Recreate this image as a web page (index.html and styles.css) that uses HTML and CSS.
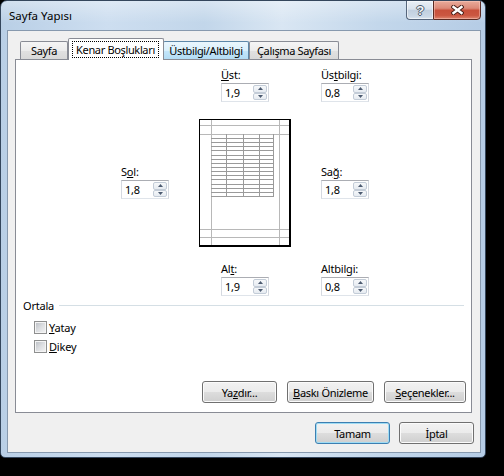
FILE: index.html
```html
<!DOCTYPE html>
<html lang="tr">
<head>
<meta charset="utf-8">
<title>Sayfa Yapısı</title>
<link rel="stylesheet" href="styles.css">
</head>
<body>
<div class="window">
  <div class="titlebar">
    <span class="title">Sayfa Yapısı</span>
    <div class="caption-buttons">
      <div class="cbtn help"><span class="help-glyph">?</span></div>
      <div class="cbtn close">
        <svg width="13" height="10" viewBox="0 0 13 10">
          <path d="M2.5 2 L10.5 8 M10.5 2 L2.5 8" stroke="#4a2018" stroke-width="4.4" stroke-linecap="square" fill="none"/>
          <path d="M2.5 2 L10.5 8 M10.5 2 L2.5 8" stroke="#ffffff" stroke-width="2.4" stroke-linecap="square" fill="none"/>
        </svg>
      </div>
    </div>
  </div>
  <div class="client">
    <div class="tabs">
      <div class="tab tab-sayfa">Sayfa</div>
      <div class="tab tab-kenar selected"><span class="focus">Kenar Boşlukları</span></div>
      <div class="tab tab-ust hover">Üstbilgi/Altbilgi</div>
      <div class="tab tab-calisma">Çalışma Sayfası</div>
    </div>
    <div class="panel">
      <div class="margins">
        <div class="field f-ust">
          <div class="label"><u>Ü</u>st:</div>
          <div class="spin"><span class="value">1,9</span><span class="arrows"><span class="arr up"><svg width="5" height="3" viewBox="0 0 5 3"><path d="M0 3 L2.5 0 L5 3 Z" fill="#4c5a70"/></svg></span><span class="arr down"><svg width="5" height="3" viewBox="0 0 5 3"><path d="M0 0 L2.5 3 L5 0 Z" fill="#4c5a70"/></svg></span></span></div>
        </div>
        <div class="field f-ustbilgi">
          <div class="label">Üs<u>t</u>bilgi:</div>
          <div class="spin"><span class="value">0,8</span><span class="arrows"><span class="arr up"><svg width="5" height="3" viewBox="0 0 5 3"><path d="M0 3 L2.5 0 L5 3 Z" fill="#4c5a70"/></svg></span><span class="arr down"><svg width="5" height="3" viewBox="0 0 5 3"><path d="M0 0 L2.5 3 L5 0 Z" fill="#4c5a70"/></svg></span></span></div>
        </div>
        <div class="field f-sol">
          <div class="label">S<u>o</u>l:</div>
          <div class="spin"><span class="value">1,8</span><span class="arrows"><span class="arr up"><svg width="5" height="3" viewBox="0 0 5 3"><path d="M0 3 L2.5 0 L5 3 Z" fill="#4c5a70"/></svg></span><span class="arr down"><svg width="5" height="3" viewBox="0 0 5 3"><path d="M0 0 L2.5 3 L5 0 Z" fill="#4c5a70"/></svg></span></span></div>
        </div>
        <svg class="preview" width="92" height="128" viewBox="0 0 92 128">
          <rect x="0" y="0" width="92" height="128" fill="#000"/>
          <rect x="1" y="1" width="89" height="125" fill="#fff"/>
          <g stroke="#b8b8b8" stroke-width="1" fill="none">
            <path d="M1 6.5 H90 M1 15.5 H90 M1 110.5 H90 M1 118.5 H90 M12.5 1 V126 M80.5 1 V126"/>
          </g>
          <g stroke="#9a9a9a" stroke-width="1" fill="none">
            <path d="M27.5 15 V78 M44.5 15 V78 M60.5 15 V78 M74.5 15 V78"/>
            <path d="M12 19.5 H75 M12 23.5 H75 M12 27.5 H75 M12 31.5 H75 M12 36.5 H75 M12 40.5 H75 M12 44.5 H75 M12 48.5 H75 M12 52.5 H75 M12 56.5 H75 M12 60.5 H75 M12 65.5 H75 M12 69.5 H75 M12 73.5 H75 M12 77.5 H75"/>
          </g>
        </svg>
        <div class="field f-sag">
          <div class="label">Sa<u>ğ</u>:</div>
          <div class="spin"><span class="value">1,8</span><span class="arrows"><span class="arr up"><svg width="5" height="3" viewBox="0 0 5 3"><path d="M0 3 L2.5 0 L5 3 Z" fill="#4c5a70"/></svg></span><span class="arr down"><svg width="5" height="3" viewBox="0 0 5 3"><path d="M0 0 L2.5 3 L5 0 Z" fill="#4c5a70"/></svg></span></span></div>
        </div>
        <div class="field f-alt">
          <div class="label">Al<u>t</u>:</div>
          <div class="spin"><span class="value">1,9</span><span class="arrows"><span class="arr up"><svg width="5" height="3" viewBox="0 0 5 3"><path d="M0 3 L2.5 0 L5 3 Z" fill="#4c5a70"/></svg></span><span class="arr down"><svg width="5" height="3" viewBox="0 0 5 3"><path d="M0 0 L2.5 3 L5 0 Z" fill="#4c5a70"/></svg></span></span></div>
        </div>
        <div class="field f-altbilgi">
          <div class="label">Altbilgi:</div>
          <div class="spin"><span class="value">0,8</span><span class="arrows"><span class="arr up"><svg width="5" height="3" viewBox="0 0 5 3"><path d="M0 3 L2.5 0 L5 3 Z" fill="#4c5a70"/></svg></span><span class="arr down"><svg width="5" height="3" viewBox="0 0 5 3"><path d="M0 0 L2.5 3 L5 0 Z" fill="#4c5a70"/></svg></span></span></div>
        </div>
      </div>

      <div class="group-head"><span class="group-title">Ortala</span><span class="rule"></span></div>
      <div class="check first"><span class="box"></span><span class="check-label"><u>Y</u>atay</span></div>
      <div class="check"><span class="box"></span><span class="check-label"><u>D</u>ikey</span></div>

      <div class="panel-buttons">
        <button class="btn w-yazdir">Ya<u>z</u>dır...</button>
        <button class="btn w-baski"><u>B</u>askı Önizleme</button>
        <button class="btn w-secenek"><u>S</u>eçenekler...</button>
      </div>
    </div>
    <div class="footer">
      <button class="btn default w-ok">Tamam</button>
      <button class="btn w-ok">İptal</button>
    </div>
  </div>
</div>
</body>
</html>
```

FILE: styles.css
```css
html, body {
  margin: 0;
  padding: 0;
}

body {
  background: #000;
  width: 504px;
  height: 476px;
  overflow: hidden;
  font-family: "Noto Sans", "Open Sans", sans-serif;
  font-size: 11px;
  letter-spacing: -0.2px;
  color: #000;
}

u {
  text-decoration: underline;
  text-underline-offset: 1px;
}

/* ---------- window frame ---------- */
.window {
  box-sizing: border-box;
  width: 486px;
  height: 458px;
  border: 1px solid #34465c;
  border-radius: 7px 7px 5px 5px;
  background:
    linear-gradient(180deg, rgba(255,255,255,0.35) 0px, rgba(255,255,255,0) 22px),
    linear-gradient(90deg, #b9cfe6 0%, #cddef0 22%, #c2d6ea 42%, #d9e6f3 58%, #c3d7eb 78%, #b5cce5 100%);
  display: flex;
  flex-direction: column;
  overflow: hidden;
}

.titlebar {
  height: 29px;
  flex: none;
  display: flex;
  align-items: flex-start;
}

.title {
  padding: 6px 0 0 8px;
  line-height: 18px;
  font-size: 11.5px;
  letter-spacing: 0;
  color: #000;
}

.caption-buttons {
  margin: -1px 4px 0 auto;
  display: flex;
  height: 20px;
}

.cbtn {
  box-sizing: border-box;
  height: 20px;
  border: 1px solid #56667c;
  display: flex;
  align-items: center;
  justify-content: center;
}

.help {
  width: 27px;
  border-right: none;
  border-radius: 0 0 0 4px;
  background: linear-gradient(180deg, #eaf0f6 0%, #d8e2ed 45%, #c1cfdf 52%, #cbd8e6 85%, #dbe5f0 100%);
  box-shadow: inset 0 0 0 1px rgba(255,255,255,0.55);
}

.help-glyph {
  font-family: "Liberation Sans", sans-serif;
  font-weight: bold;
  font-size: 13px;
  line-height: 13px;
  color: #f2f5f8;
  text-shadow: 1px 0 0 #4e5b6b, -1px 0 0 #4e5b6b, 0 1px 0 #4e5b6b, 0 -1px 0 #4e5b6b;
}

.close {
  width: 48px;
  border-color: #5b2a22;
  border-radius: 0 0 4px 0;
  background: linear-gradient(180deg, #e9ab9b 0%, #dc8a78 40%, #c8503b 52%, #cb5741 80%, #de8670 100%);
  box-shadow: inset 0 0 0 1px rgba(255,210,200,0.45);
}

.close svg {
  display: block;
}

/* ---------- client area ---------- */
.client {
  box-sizing: border-box;
  width: 474px;
  height: 423px;
  margin-left: 6px;
  border: 1px solid #8799ae;
  background: #f0f0f0;
  padding-top: 7px;
  display: flex;
  flex-direction: column;
}

.tabs {
  display: flex;
  align-items: flex-end;
  height: 21px;
  margin-left: 12px;
}

.tab {
  box-sizing: border-box;
  height: 18px;
  border: 1px solid #898c95;
  border-bottom: none;
  border-radius: 2px 2px 0 0;
  background: linear-gradient(180deg, #f5f5f5 0%, #ececec 50%, #e1e1e1 51%, #d9d9d9 100%);
  display: flex;
  align-items: center;
  justify-content: center;
  white-space: nowrap;
  letter-spacing: -0.35px;
}

.tab-sayfa { width: 48px; }
.tab-kenar { width: 96px; }
.tab-ust { width: 86px; margin-left: -1px; }
.tab-calisma { width: 90px; }

.tab.hover {
  border-color: #5d87a8;
  background: linear-gradient(180deg, #eaf6fd 0%, #d9f0fc 50%, #c4e6fa 51%, #b3dcf4 100%);
}

.tab.selected {
  height: 22px;
  margin-bottom: -1px;
  position: relative;
  z-index: 1;
  background: #fff;
  align-items: flex-start;
  justify-content: flex-start;
  padding: 2px 0 0 3px;
}

.focus {
  box-sizing: border-box;
  width: 87px;
  height: 17px;
  border: 1px dotted #000;
  display: flex;
  align-items: center;
  justify-content: center;
}

/* ---------- tab panel ---------- */
.panel {
  box-sizing: border-box;
  width: 457px;
  height: 354px;
  margin-left: 7px;
  border: 1px solid #898c95;
  background: #fff;
  padding: 7px 5px 9px 7px;
  display: flex;
  flex-direction: column;
}

.margins {
  display: grid;
  grid-template-columns: 78px 122px 48px;
  margin-left: 98px;
  align-items: start;
}

.field {
  display: flex;
  flex-direction: column;
  width: 48px;
}

.label {
  height: 15px;
  line-height: 15px;
  white-space: nowrap;
}

.spin {
  box-sizing: border-box;
  margin-top: 1px;
  height: 19px;
  border: 1px solid;
  border-color: #abadb3 #d5d9e0 #dfe4ea #d5d9e0;
  background: #fff;
  display: flex;
  align-items: center;
}

.value {
  flex: 1;
  padding-left: 3px;
  line-height: 15px;
}

.arrows {
  width: 14px;
  height: 15px;
  margin-right: 1px;
  display: flex;
  flex-direction: column;
}

.arr {
  box-sizing: border-box;
  flex: 1;
  border: 1px solid #c3ccd7;
  border-radius: 2px;
  background: linear-gradient(180deg, #f6f8fa 0%, #e6ebf1 100%);
  display: flex;
  align-items: center;
  justify-content: center;
}

.arr svg { display: block; }

.f-ust      { grid-column: 2; grid-row: 1; margin-left: 22px; }
.f-ustbilgi { grid-column: 3; grid-row: 1; }
.f-sol      { grid-column: 1; grid-row: 2; margin-top: 62px; }
.preview    { grid-column: 2; grid-row: 2; margin-top: 17px; display: block; }
.f-sag      { grid-column: 3; grid-row: 2; margin-top: 62px; }
.f-alt      { grid-column: 2; grid-row: 3; margin-left: 22px; margin-top: 14px; }
.f-altbilgi { grid-column: 3; grid-row: 3; margin-top: 14px; }

/* ---------- Ortala group ---------- */
.group-head {
  display: flex;
  align-items: center;
  margin-top: 2px;
  height: 15px;
  line-height: 15px;
}

.group-title {
  margin-right: 5px;
}

.rule {
  flex: 1;
  height: 1px;
  background: #d5dfe5;
  margin-right: 2px;
}

.check {
  display: flex;
  align-items: center;
  height: 19px;
  margin-left: 11px;
}

.check.first {
  margin-top: 5px;
}

.box {
  box-sizing: border-box;
  width: 13px;
  height: 13px;
  border: 1px solid #8e8f8f;
  background: linear-gradient(135deg, #b8bcc2 0%, #dcdee1 50%, #f4f4f4 100%);
  box-shadow: inset 0 0 0 1px #f4f4f4;
  margin-right: 2px;
}

.check-label {
  line-height: 15px;
}

/* ---------- buttons ---------- */
.btn {
  box-sizing: border-box;
  height: 22px;
  padding: 0;
  margin: 0;
  border: 1px solid #707070;
  border-radius: 3px;
  background: linear-gradient(180deg, #f2f2f2 0%, #ebebeb 50%, #dddddd 51%, #cfcfcf 100%);
  box-shadow: inset 0 0 0 1px #fbfbfb;
  font-family: inherit;
  font-size: 11px;
  letter-spacing: -0.3px;
  color: #000;
  display: flex;
  align-items: center;
  justify-content: center;
  white-space: nowrap;
}

.btn.default {
  border-color: #3c7fb1;
  box-shadow: inset 0 0 0 1px #9fdcf4;
}

.panel-buttons {
  margin-top: auto;
  display: flex;
  justify-content: flex-end;
  gap: 10px;
}

.w-yazdir  { width: 75px; }
.w-baski   { width: 87px; }
.w-secenek { width: 82px; }
.w-ok      { width: 75px; }

.footer {
  margin-top: 9px;
  display: flex;
  justify-content: flex-end;
  gap: 9px;
  padding-right: 6px;
}
```
